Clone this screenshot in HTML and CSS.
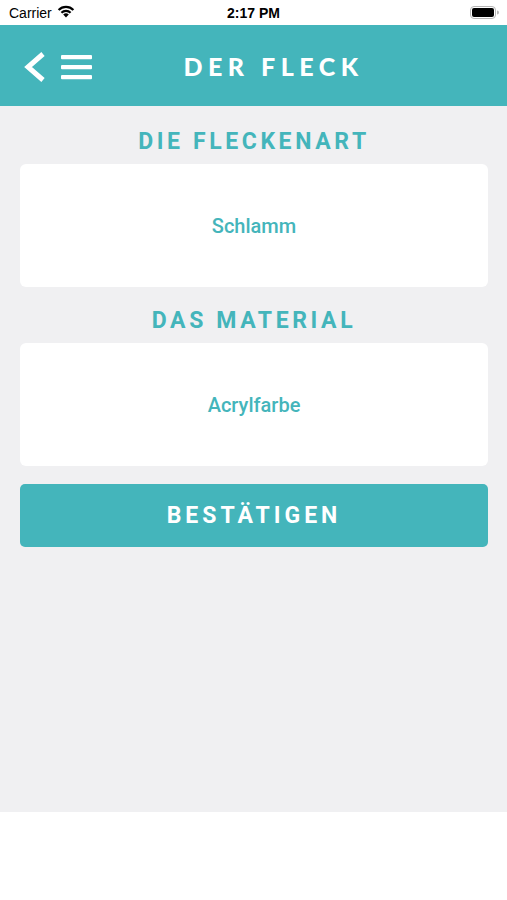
FILE: index.html
```html
<!DOCTYPE html>
<html>
<head>
    <title>Der Fleck</title>
    <link rel="stylesheet" href="styles.css">
</head>
<body>
    <div class="statusbar">
        <div class="carrier">
            Carrier
            <svg class="wifi" width="18" height="13" viewBox="0 0 18 13">
                <path d="M9 12.5 L6.2 9.6 A4 4 0 0 1 11.8 9.6 Z" fill="#000"/>
                <path d="M4.4 7.8 A6.6 6.6 0 0 1 13.6 7.8" fill="none" stroke="#000" stroke-width="2.2"/>
                <path d="M1.6 5 A10.5 10.5 0 0 1 16.4 5" fill="none" stroke="#000" stroke-width="2.2"/>
            </svg>
        </div>
        <div class="time">2:17 PM</div>
        <div class="battery">
            <svg width="30" height="13" viewBox="0 0 30 13">
                <rect x="0.5" y="0.5" width="25" height="12" rx="3.5" fill="none" stroke="#b5b5b5"/>
                <rect x="2" y="2" width="22" height="9" rx="2" fill="#000"/>
                <path d="M27 4.5 a2 2 0 0 1 0 4 Z" fill="#b5b5b5"/>
            </svg>
        </div>
    </div>

    <header class="topbar">
        <div class="nav-icons">
            <svg width="22" height="30" viewBox="0 0 22 30">
                <polyline points="19,2 4,15 19,28" fill="none" stroke="#fff" stroke-width="5"/>
            </svg>
            <svg width="31" height="26" viewBox="0 0 31 26">
                <rect x="0" y="1" width="31" height="4.2" rx="1" fill="#fff"/>
                <rect x="0" y="11" width="31" height="4.2" rx="1" fill="#fff"/>
                <rect x="0" y="21" width="31" height="4.2" rx="1" fill="#fff"/>
            </svg>
        </div>
        <h1 class="title">DER FLECK</h1>
    </header>

    <main class="content">
        <section class="group">
            <h2 class="group-title">DIE FLECKENART</h2>
            <div class="card">Schlamm</div>
        </section>
        <section class="group">
            <h2 class="group-title">DAS MATERIAL</h2>
            <div class="card">Acrylfarbe</div>
        </section>
        <button class="confirm" type="button">BESTÄTIGEN</button>
    </main>
</body>
</html>
```

FILE: styles.css
```css
body { margin: 0; width: 507px; height: 900px; background: #fff; font-family: Roboto, "Liberation Sans", sans-serif; }

.statusbar { height: 25px; display: flex; align-items: center; justify-content: space-between; padding: 0 7px 0 9px; font-family: "Liberation Sans", Arial, sans-serif; font-size: 14px; color: #000; position: relative; }
.carrier { display: flex; align-items: center; gap: 5px; }
.wifi { margin-top: -2px; }
.time { position: absolute; left: 0; right: 0; text-align: center; font-weight: bold; pointer-events: none; }
.battery { display: flex; align-items: center; }

.topbar { height: 81px; background: #44b5bb; display: flex; align-items: center; padding: 0 52px 0 24px; }
.nav-icons { display: flex; align-items: center; gap: 15px; margin-top: 2px; }
.title { flex: 1; margin: 0; text-align: center; color: #fff; font-family: Lato, sans-serif; font-weight: 900; font-size: 25px; letter-spacing: 5.5px; }

.content { height: 706px; background: #f0f0f2; box-sizing: border-box; padding: 22px 19px 0 20px; display: flex; flex-direction: column; }
.group + .group { margin-top: 20px; }
.group-title { margin: 0 0 8px; height: 28px; line-height: 28px; text-align: center; color: #44b5bb; font-size: 23px; font-weight: bold; letter-spacing: 3.6px; }
.card { height: 123px; background: #fff; border-radius: 6px; display: flex; align-items: center; justify-content: center; color: #44b5bb; font-size: 20px; font-weight: 500; }

.confirm { margin-top: 18px; height: 63px; border: none; border-radius: 5px; background: #44b5bb; color: #fff; font-family: Roboto, sans-serif; font-size: 23px; font-weight: bold; letter-spacing: 4px; cursor: pointer; }
```
